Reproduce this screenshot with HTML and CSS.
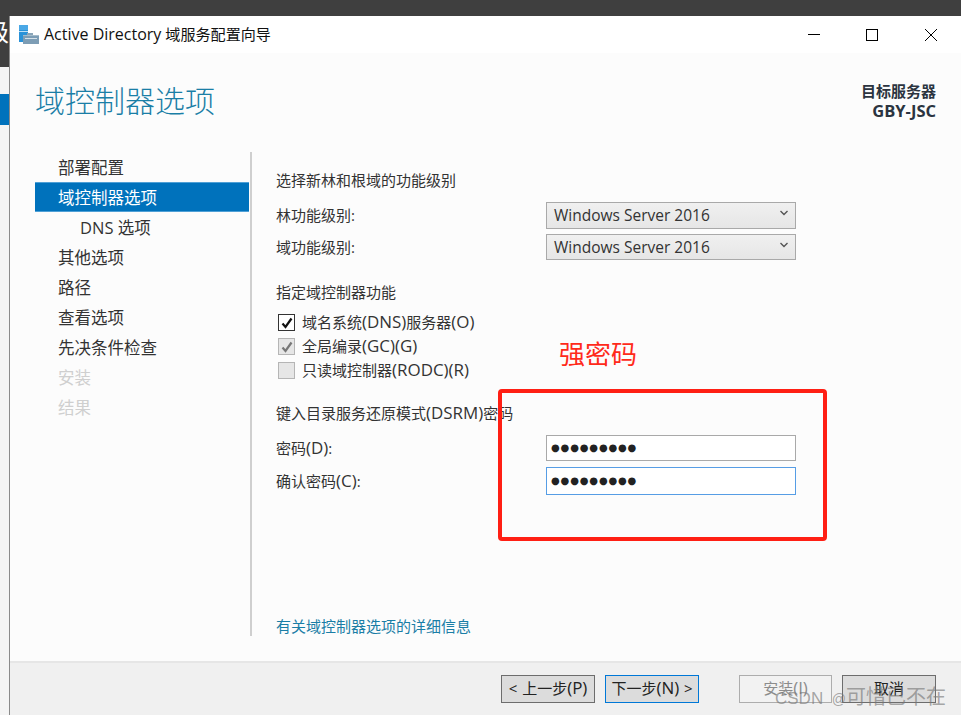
FILE: index.html
```html
<!DOCTYPE html>
<html lang="zh">
<head>
<meta charset="utf-8">
<title>Active Directory 域服务配置向导</title>
<link rel="stylesheet" href="styles.css">
</head>
<body>
<div class="screen">
  <div class="topbar"></div>
  <div class="desk">
    <div class="strip">
      <div class="strip-dark"><span class="strip-glyph">级</span></div>
      <div class="strip-gap"></div>
      <div class="strip-blue"></div>
    </div>
    <div class="window">
      <div class="titlebar">
        <svg class="app-icon" width="20" height="20" viewBox="0 0 20 20">
          <rect x="0" y="0" width="9" height="17" fill="#2a92d8"/>
          <rect x="0" y="0" width="9" height="5" fill="#4aa8e6"/>
          <rect x="0" y="6" width="9" height="1" fill="#bfe0f5"/>
          <path d="M8 8h6v2H8z" fill="#8aa5b8"/>
          <rect x="4" y="10" width="16" height="9" fill="#7d9db5"/>
          <rect x="4" y="10" width="16" height="1" fill="#a5bccb"/>
          <rect x="6" y="13" width="12" height="1" fill="#d5e0e8"/>
        </svg>
        <span class="title-text"><span class="lat-title">Active Directory</span> 域服务配置向导</span>
        <div class="winctl">
          <svg class="ctl-min" width="14" height="14" viewBox="0 0 14 14"><path d="M1 6.5h12" stroke="#000" stroke-width="1"/></svg>
          <svg class="ctl-max" width="14" height="14" viewBox="0 0 14 14"><rect x="1.5" y="1.5" width="11" height="11" fill="none" stroke="#000" stroke-width="1"/></svg>
          <svg class="ctl-close" width="14" height="14" viewBox="0 0 14 14"><path d="M1 1l12 12M13 1L1 13" stroke="#000" stroke-width="1"/></svg>
        </div>
      </div>
      <div class="body">
        <div class="head">
          <h1 class="heading">域控制器选项</h1>
          <div class="target"><div>目标服务器</div><div class="target-name">GBY-JSC</div></div>
        </div>
        <div class="columns">
          <nav class="nav">
            <div class="nav-item">部署配置</div>
            <div class="nav-item active">域控制器选项</div>
            <div class="nav-item sub">DNS 选项</div>
            <div class="nav-item">其他选项</div>
            <div class="nav-item">路径</div>
            <div class="nav-item">查看选项</div>
            <div class="nav-item">先决条件检查</div>
            <div class="nav-item off">安装</div>
            <div class="nav-item off">结果</div>
          </nav>
          <main class="main">
            <div class="section-title first">选择新林和根域的功能级别</div>
            <div class="row row-a">
              <label class="field-label">林功能级别:</label>
              <div class="select"><span>Windows Server 2016</span>
                <svg width="10" height="6" viewBox="0 0 10 6"><path d="M1.5 1l3.5 3.5L8.500 1" fill="none" stroke="#555" stroke-width="1.4"/></svg>
              </div>
            </div>
            <div class="row row-b">
              <label class="field-label">域功能级别:</label>
              <div class="select"><span>Windows Server 2016</span>
                <svg width="10" height="6" viewBox="0 0 10 6"><path d="M1.5 1l3.5 3.5L8.500 1" fill="none" stroke="#555" stroke-width="1.4"/></svg>
              </div>
            </div>
            <div class="section-title second">指定域控制器功能</div>
            <div class="checks">
              <div class="check">
                <span class="box on"><svg width="14" height="14" viewBox="0 0 14 14"><path d="M2.5 7.5l3 3.5 6-8.5" fill="none" stroke="#111" stroke-width="2.2"/></svg></span>
                <span class="check-text">域名系统<span class="lat">(DNS)</span>服务器<span class="lat">(O)</span></span>
              </div>
              <div class="check">
                <span class="box dis"><svg width="14" height="14" viewBox="0 0 14 14"><path d="M2.5 7.5l3 3.5 6-8.5" fill="none" stroke="#777" stroke-width="2.2"/></svg></span>
                <span class="check-text">全局编录<span class="lat">(GC)(G)</span></span>
              </div>
              <div class="check">
                <span class="box dis"></span>
                <span class="check-text">只读域控制器<span class="lat">(RODC)(R)</span></span>
              </div>
            </div>
            <div class="section-title third">键入目录服务还原模式<span class="lat">(DSRM)</span>密码</div>
            <div class="row row-c">
              <label class="field-label">密码<span class="lat">(D)</span>:</label>
              <div class="input"><span class="dots">●●●●●●●●●</span></div>
            </div>
            <div class="row row-d">
              <label class="field-label">确认密码<span class="lat">(C)</span>:</label>
              <div class="input focus"><span class="dots">●●●●●●●●●</span></div>
            </div>
            <a class="more" href="#">有关域控制器选项的详细信息</a>
          </main>
        </div>
      </div>
      <div class="footer">
        <div class="btn">&lt; 上一步<span class="lat">(P)</span></div>
        <div class="btn default">下一步<span class="lat">(N)</span> &gt;</div>
        <div class="btn disabled install">安装<span class="lat">(I)</span></div>
        <div class="btn">取消</div>
      </div>
    </div>
  </div>
  <div class="annot-box"></div>
  <div class="annot-text">强密码</div>
  <div class="watermark"><span class="wm-lat">CSDN</span> <span class="wm-at">@</span>可惜已不在</div>
</div>
</body>
</html>
```
FILE: styles.css
```css
* { box-sizing: border-box; }
html, body { margin: 0; padding: 0; }
body {
  font-family: "Open Sans", "Noto Sans CJK SC", sans-serif;
  color: #333;
  background: #fcfcfc;
  overflow: hidden;
}
.screen { position: relative; width: 961px; height: 715px; overflow: hidden; }
.topbar { height: 16px; background: #3f3f3f; }
.desk { display: flex; height: 699px; }
.strip { width: 10px; flex: none; border-right: 1px solid #8a8a8a; background: #f4f4f4; overflow: hidden; }
.strip-dark { height: 51px; background: #3f3f3f; overflow: hidden; position: relative; }
.strip-glyph { position: absolute; left: -15px; top: 0; color: #fff; font-size: 24px; line-height: 32px; }
.strip-gap { height: 27px; }
.strip-blue { height: 31px; background: #0072bc; }
.window { flex: 1; display: flex; flex-direction: column; min-width: 0; background: #fcfcfc; }

.lat { font-size: 1.13em; line-height: 1; }

.titlebar { height: 37px; flex: none; background: #fff; display: flex; align-items: center; padding-left: 9px; }
.app-icon { flex: none; margin-top: 1px; }
.title-text { margin-left: 5px; margin-bottom: 2px; font-size: 15.1px; color: #111; line-height: 20px; white-space: nowrap; }
.lat-title { font-size: 16px; line-height: 1; }
.winctl { margin-left: auto; display: flex; padding-right: 23px; }
.winctl svg { display: block; }
.ctl-max { margin-left: 44px; }
.ctl-close { margin-left: 45px; }

.body { flex: 1; min-height: 0; display: flex; flex-direction: column; }
.head { display: flex; justify-content: space-between; height: 99px; flex: none; padding: 28px 25px 0 25px; }
.heading { margin: 0; font-size: 30px; font-weight: 300; line-height: 40px; color: #1a7ea6; }
.target { text-align: right; font-weight: 700; font-size: 15px; line-height: 19px; color: #2b3440; margin-top: 1px; }
.target-name { font-size: 16.5px; }

.columns { display: flex; flex: 1; min-height: 0; }
.nav { width: 214px; margin-left: 25px; flex: none; height: 484px; }
.nav-item { height: 30px; line-height: 31px; padding-left: 23px; font-size: 16.5px; color: #333; white-space: nowrap; }
.nav-item.active { background: #0072bc; color: #fff; border: 1px solid #4fa0d6; border-width: 1px 0; line-height: 29px; }
.nav-item.sub { padding-left: 45px; }
.nav-item.off { color: #cfcfcf; }

.main { margin-left: 1px; border-left: 2px solid #cfcfcf; height: 484px; width: 600px; padding-left: 24px; position: relative; flex: none; font-size: 15px; }
.section-title { font-size: 15px; line-height: 20px; color: #333; white-space: nowrap; }
.first { margin-top: 18px; }
.row { display: flex; align-items: center; }
.field-label { width: 270px; flex: none; color: #333; font-size: 15px; line-height: 20px; }
.row-a { margin-top: 12px; height: 27px; }
.row-b { margin-top: 5px; height: 26px; }
.row-a .field-label { padding-bottom: 2px; }
.select { width: 250px; height: 100%; border: 1px solid #a9a9a9; background: linear-gradient(#f0f0f0, #e6e6e6); display: flex; align-items: center; justify-content: space-between; padding: 0 6px 1px 7px; font-size: 15.5px; color: #333; }
.select svg { margin-bottom: 4px; }
.second { margin-top: 22px; }
.checks { margin-top: 12px; display: flex; flex-direction: column; gap: 7px; margin-left: 2px; }
.check { display: flex; align-items: center; height: 17px; gap: 7px; font-size: 15px; line-height: 17px; color: #333; white-space: nowrap; }
.check-text { margin-top: -1px; }
.box { width: 17px; height: 17px; flex: none; border: 1px solid #333; background: #fff; display: flex; align-items: center; justify-content: center; }
.box.dis { border-color: #b5b5b5; background: #e6e6e6; }
.third { margin-top: 24px; }
.row-c { margin-top: 12px; height: 26px; }
.row-d { margin-top: 6px; height: 28px; }
.input { width: 250px; height: 100%; border: 1px solid #a9a9a9; background: #fff; display: flex; align-items: center; padding-left: 4px; }
.input.focus { border-color: #569de5; }
.dots { font-family: "DejaVu Sans", sans-serif; font-size: 10px; letter-spacing: 0.85px; color: #222; line-height: 1; }
.more { position: absolute; left: 24px; top: 464px; font-size: 15px; line-height: 20px; color: #1a7ea6; text-decoration: none; white-space: nowrap; }

.footer { height: 54px; flex: none; background: #f0f0f0; border-top: 2px solid #e6e6e6; display: flex; align-items: flex-start; padding: 12px 25px 0 0; justify-content: flex-end; gap: 10px; }
.btn { width: 94px; height: 28px; border: 1px solid #6d6d6d; background: #dcdcdc; font-size: 15px; line-height: 25px; text-align: center; color: #222; white-space: nowrap; word-spacing: 1px; }
.btn.default { border-color: #0078d7; }
.btn.disabled { background: #f2f2f2; border-color: #adadad; color: #8c8c8c; }
.btn.install { margin-left: 30px; width: 93px; }

.annot-box { position: absolute; left: 498px; top: 389px; width: 329px; height: 152px; border: 4px solid #ff1f14; border-radius: 4px; }
.annot-text { position: absolute; left: 559px; top: 336px; font-size: 26px; line-height: 36px; color: #ff2a1a; white-space: nowrap; }
.watermark { position: absolute; left: 775px; top: 684px; font-size: 20px; line-height: 26px; color: rgba(120,120,120,0.65); white-space: nowrap; font-family: "Liberation Sans", "Noto Sans CJK SC", sans-serif; word-spacing: 3px; }
.wm-lat { font-size: 17px; }
.wm-at { font-size: 14px; }
```
